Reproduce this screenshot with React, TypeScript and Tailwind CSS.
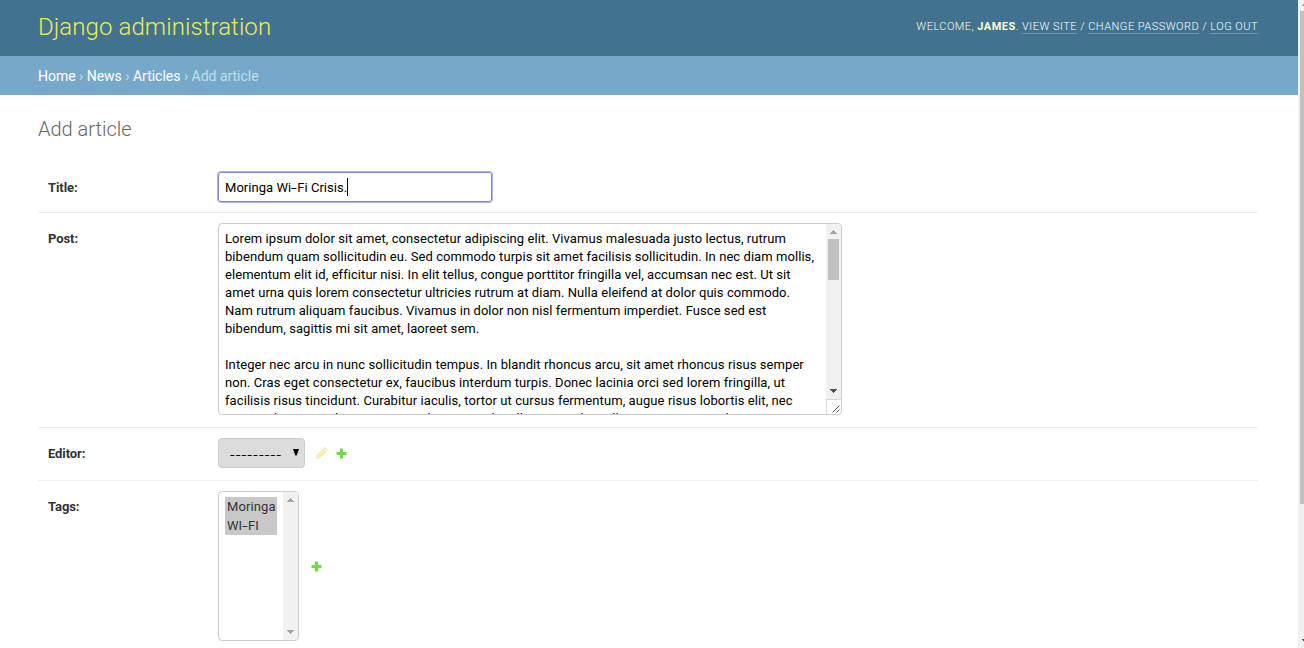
import React from 'react';

const intro = [
  'Lorem ipsum dolor sit amet, consectetur adipiscing elit. Vivamus malesuada justo lectus, rutrum',
  'bibendum quam sollicitudin eu. Sed commodo turpis sit amet facilisis sollicitudin. In nec diam mollis,',
  'elementum elit id, efficitur nisi. In elit tellus, congue porttitor fringilla vel, accumsan nec est. Ut sit',
  'amet urna quis lorem consectetur ultricies rutrum at diam. Nulla eleifend at dolor quis commodo.',
  'Nam rutrum aliquam faucibus. Vivamus in dolor non nisl fermentum imperdiet. Fusce sed est',
  'bibendum, sagittis mi sit amet, laoreet sem.',
];

const body = [
  'Integer nec arcu in nunc sollicitudin tempus. In blandit rhoncus arcu, sit amet rhoncus risus semper',
  'non. Cras eget consectetur ex, faucibus interdum turpis. Donec lacinia orci sed lorem fringilla, ut',
  'facilisis risus tincidunt. Curabitur iaculis, tortor ut cursus fermentum, augue risus lobortis elit, nec',
  'commodo massa donec a cursus donec eget la tellus metus hac ullamcorper massa dum',
];

function Arrow({ up = false, color = '#a3a3a3' }: { up?: boolean; color?: string }) {
  return (
    <svg width="7" height="4" viewBox="0 0 7 4" shapeRendering="crispEdges" className="shrink-0">
      <path d={up ? 'M3 0h1v1h1v1h1v1h1v1H0V3h1V2h1V1h1z' : 'M0 0h7v1H6v1H5v1H4v1H3V3H2V2H1V1H0z'} fill={color} />
    </svg>
  );
}

function Plus() {
  return (
    <svg width="11" height="11" viewBox="0 0 11 11" className="shrink-0">
      <path d="M4 .5h3V4h3.5v3H7v3.5H4V7H.5V4H4z" fill="#70d944" />
    </svg>
  );
}

function Pencil() {
  return (
    <svg width="12" height="12" viewBox="0 0 12 12" className="shrink-0">
      <path d="M.2 11.7 1 7.6 7.2 1.4l3.4 3.4-6.2 6.2z" fill="#fbe9ad" />
      <path d="m7.9.8.5-.5q.5-.4 1 0l2.2 2.2q.4.5 0 1l-.6.6z" fill="#fbe9ad" />
      <path d="m1.6 9 1.3 1.3" stroke="#fff" strokeWidth=".7" />
      <path d="m3.2 8.2 4.6-4.6" stroke="#fff" strokeWidth=".4" />
    </svg>
  );
}

function WideHyphen() {
  return <span className="inline-block w-[6px] origin-left scale-x-[1.6]">-</span>;
}

function Label({ children }: { children: React.ReactNode }) {
  return <div className="ml-[10px] w-[170px] shrink-0 pt-[7px] text-[13px] leading-[18px] font-bold tracking-[-0.08px] text-[#333]">{children}</div>;
}

export default function App() {
  return (
    <div className="flex h-[648px] w-[1304px] overflow-hidden bg-white font-['Roboto',sans-serif] text-[#333]">
      <div className="flex w-[1298px] shrink-0 flex-col">
        <header className="flex h-14 shrink-0 items-center justify-between bg-[#417391] pr-10 pl-[38px]">
          <h1 className="mt-[-2px] text-[24px] leading-7 font-light tracking-[0.08px] text-[#eeec52]">Django administration</h1>
          <div className="mt-[-3px] text-[11px] leading-[15px] font-light tracking-[0.48px] whitespace-nowrap text-[#ffc]">
            WELCOME, <strong className="font-bold">JAMES</strong>.{' '}
            <span className="border-b border-white/25 text-white">VIEW SITE</span> /{' '}
            <span className="border-b border-white/25 text-white">CHANGE PASSWORD</span> /{' '}
            <span className="border-b border-white/25 text-white">LOG OUT</span>
          </div>
        </header>
        <nav className="h-[39px] shrink-0 bg-[#76a9c9] pt-[11px] pl-[38px] text-[14px] leading-[18px] tracking-[-0.015px] text-[#c4dce8]">
          <span className="text-white">Home</span> › <span className="text-white">News</span> ›{' '}
          <span className="text-white">Articles</span> › Add article
        </nav>
        <main className="flex flex-col pr-10 pl-[38px]">
          <h2 className="mt-[22px] mb-[21px] text-[20px] leading-6 font-light text-[#666]">Add article</h2>
          <div className="flex h-[51px] border-b border-[#eee] pt-[10px]">
            <Label>Title:</Label>
            <div className="flex h-[30px] w-[274px] items-center rounded-[3px] border border-[#8184d6] pl-[6px] text-[13px] leading-[18px] text-black ring-1 ring-[#b0b3f8]">
              <span className="pt-[2px] tracking-[0.04px] whitespace-pre">
                Moringa Wi<WideHyphen />Fi Crisis.
              </span>
              <span className="h-[18px] w-px bg-black" />
            </div>
          </div>
          <div className="flex h-[215px] border-b border-[#eee] pt-[10px]">
            <Label>Post:</Label>
            <div className="flex h-[192px] w-[624px] overflow-hidden rounded-[4px] border border-[#ccc]">
              <div className="flex-1 overflow-hidden pt-[6px] pl-[6px] text-[13px] leading-[18px] whitespace-pre text-black">
                <div className="mb-[18px] tracking-[0.063px]">
                  {intro.map((line) => (
                    <div key={line}>{line}</div>
                  ))}
                </div>
                <div className="tracking-[0.081px]">
                  {body.map((line) => (
                    <div key={line}>{line}</div>
                  ))}
                </div>
              </div>
              <div className="flex w-[15px] shrink-0 flex-col">
                <div className="flex flex-1 flex-col items-center bg-[#f1f1f1] pt-[6px] pb-[6px]">
                  <Arrow up />
                  <div className="mt-[5px] h-[41px] w-[11px] bg-[#c1c1c1]" />
                  <div className="flex-1" />
                  <Arrow color="#505050" />
                </div>
                <svg width="15" height="15" viewBox="0 0 15 15">
                  <path d="M0 .5h15M.5 0v15" fill="none" stroke="#d9d9d9" />
                  <path d="m6.5 13.5 7-7M10.5 13.5l3-3" stroke="#555" />
                </svg>
              </div>
            </div>
          </div>
          <div className="flex h-[53px] border-b border-[#eee] pt-[10px]">
            <Label>Editor:</Label>
            <div className="flex h-[30px] w-[87px] items-center rounded-[4px] border border-[#ccc] bg-[#dcdcdc] pl-[11px] text-[13px] text-black">
              <div className="w-[63px] pt-[3px]">
                <span className="inline-block origin-left scale-x-[1.3] tracking-[0.85px]">---------</span>
              </div>
              <svg width="6" height="7" viewBox="0 0 6 7" className="mb-[2px]"><path d="M0 0h6L3.7 6.5H2.3z" /></svg>
            </div>
            <div className="ml-[11px] flex h-[30px] items-center gap-2"><Pencil /><Plus /></div>
          </div>
          <div className="flex pt-[10px]">
            <Label>Tags:</Label>
            <div className="flex h-[150px] w-[81px] overflow-hidden rounded-[4px] border border-[#ccc]">
              <div className="flex-1 pt-[5px] pl-[6px] text-[13px] leading-[19px]">
                <div className="w-[52px] bg-[#c8c8c8] pl-[2px] tracking-[0.12px]">Moringa</div>
                <div className="h-[19px] w-[52px] bg-[#c8c8c8] pl-[2px]">WI<WideHyphen />FI</div>
              </div>
              <div className="flex w-[15px] shrink-0 flex-col items-center justify-between bg-[#f1f1f1] py-[6px]">
                <Arrow up />
                <Arrow />
              </div>
            </div>
            <div className="ml-3 flex h-[150px] items-center"><Plus /></div>
          </div>
        </main>
      </div>
      <div className="flex w-[6px] shrink-0 flex-col items-end overflow-hidden bg-[#f1f1f1]">
        <svg width="6" height="11" viewBox="0 0 6 11" shapeRendering="crispEdges"><path d="M5 4h1v2H4V5h1z" fill="#a3a3a3" /></svg>
        <div className="h-[493px] w-1 bg-[#c1c1c1]" />
        <div className="flex-1" />
        <svg width="6" height="11" viewBox="0 0 6 11" shapeRendering="crispEdges"><path d="M4 2h2v2H5V3H4z" fill="#505050" /></svg>
      </div>
    </div>
  );
}
